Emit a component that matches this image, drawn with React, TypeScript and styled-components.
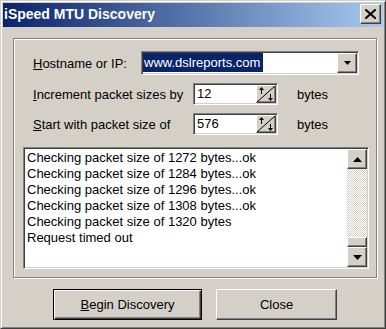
import React from "react";
import styled, { createGlobalStyle, css } from "styled-components";

const Global = createGlobalStyle`
  html, body { margin: 0; padding: 0; background: #d4d0c8; }
  * { box-sizing: border-box; }
  body { font-family: "Liberation Sans", Arial, sans-serif; font-size: 13px; color: #000; }
`;

const raised = css`
  border: 1px solid;
  border-color: #fff #404040 #404040 #fff;
  box-shadow: inset -1px -1px #808080;
  background: #d4d0c8;
`;

const sunken = css`
  border: 1px solid;
  border-color: #808080 #fff #fff #808080;
  box-shadow: inset 1px 1px #404040, inset -1px -1px #d4d0c8;
`;

const Window = styled.div`
  width: 386px;
  height: 329px;
  background: #d4d0c8;
  border: 1px solid;
  border-color: #d4d0c8 #404040 #404040 #d4d0c8;
  box-shadow: inset 1px 1px #fff, inset -1px -1px #808080;
  padding: 2px;
  display: flex;
  flex-direction: column;
`;

const TitleBar = styled.div`
  height: 24px;
  display: flex;
  align-items: flex-start;
  background: linear-gradient(to right, #0a246a, #a6caf0);
`;

const Title = styled.div`
  flex: 1;
  padding-left: 1px;
  line-height: 23px;
  font-size: 14px;
  font-weight: bold;
  color: #fff;
  white-space: nowrap;
`;

const CloseBox = styled.div`
  ${raised};
  width: 21px;
  height: 20px;
  margin: 1px 2px 0 0;
  display: flex;
  align-items: center;
  justify-content: center;
`;

const Body = styled.div`
  padding: 11px 6px 0 10px;
  display: flex;
  flex-direction: column;
`;

const GroupBox = styled.div`
  width: 364px;
  height: 240px;
  border: 1px solid #808080;
  box-shadow: inset 1px 1px #fff, 1px 1px #fff;
  padding: 12px 7px 8px 9px;
  display: flex;
  flex-direction: column;
`;

const Fields = styled.div`
  padding: 0 10px;
  display: flex;
  flex-direction: column;
  gap: 8px;
`;

const Row = styled.div<{ $h: number }>`
  height: ${(p) => p.$h}px;
  display: flex;
  align-items: center;
`;

const Label = styled.div<{ $w: number }>`
  width: ${(p) => p.$w}px;
  flex: none;
  white-space: nowrap;
`;

const Combo = styled.div`
  ${sunken};
  width: 218px;
  height: 24px;
  padding: 1px;
  background: #fff;
  display: flex;
  align-items: stretch;
`;

const ComboText = styled.div`
  flex: 1;
  display: flex;
  align-items: stretch;
  padding-bottom: 1px;
`;

const Selected = styled.span`
  background: #0a246a;
  color: #fff;
  padding: 0 1px;
  width: 120px;
  line-height: 19px;
  white-space: nowrap;
`;

const DropButton = styled.div`
  ${raised};
  width: 20px;
  height: 20px;
  display: flex;
  align-items: center;
  justify-content: center;
`;

const SpinField = styled.div`
  ${sunken};
  width: 85px;
  height: 22px;
  padding: 1px;
  background: #fff;
  display: flex;
`;

const SpinValue = styled.div`
  flex: 1;
  padding-left: 2px;
  line-height: 18px;
`;

const Spinner = styled.div`
  ${raised};
  width: 20px;
  height: 18px;
  position: relative;
`;

const Unit = styled.div`
  margin-left: 19px;
`;

const Log = styled.div`
  ${sunken};
  margin-top: 12px;
  width: 346px;
  height: 122px;
  padding: 1px;
  background: #fff;
  display: flex;
`;

const LogText = styled.div`
  flex: 1;
  padding: 1px 2px;
  line-height: 16px;
  white-space: nowrap;
  overflow: hidden;
`;

const ScrollBar = styled.div`
  width: 20px;
  display: flex;
  flex-direction: column;
`;

const ScrollButton = styled.div`
  ${raised};
  height: 20px;
  flex: none;
  display: flex;
  align-items: center;
  justify-content: center;
`;

const Track = styled.div`
  flex: 1;
  display: flex;
  flex-direction: column;
  justify-content: flex-end;
  background-image: conic-gradient(#fff 25%, #d4d0c8 0 50%, #fff 0 75%, #d4d0c8 0);
  background-size: 2px 2px;
`;

const Thumb = styled.div`
  ${raised};
  height: 10px;
`;

const Buttons = styled.div`
  margin-top: 11px;
  padding-left: 40px;
  display: flex;
  gap: 14px;
`;

const PushButton = styled.div<{ $w: number; $default?: boolean }>`
  width: ${(p) => p.$w}px;
  height: 31px;
  background: #d4d0c8;
  display: flex;
  align-items: center;
  justify-content: center;
  ${(p) =>
    p.$default
      ? css`
          border: 1px solid #000;
          box-shadow: inset 1px 1px #fff, inset -1px -1px #404040, inset -2px -2px #808080;
        `
      : css`
          border: 1px solid;
          border-color: #fff #404040 #404040 #fff;
          box-shadow: inset -1px -1px #808080;
        `}
`;

const Arrow = ({ down, w = 7, h = 4 }: { down?: boolean; w?: number; h?: number }) => (
  <svg width={w} height={h} viewBox={`0 0 ${w} ${h}`}>
    <polygon points={down ? `0,0 ${w},0 ${w / 2},${h}` : `0,${h} ${w},${h} ${w / 2},0`} fill="#000" />
  </svg>
);

const SpinGlyph = () => (
  <svg width="18" height="16" viewBox="0 0 18 16" style={{ position: "absolute", left: 0, top: 0 }}>
    <line x1="0" y1="16" x2="18" y2="0" stroke="#000" strokeWidth="1" />
    <line x1="4.5" y1="2" x2="4.5" y2="8" stroke="#000" strokeWidth="1" />
    <polygon points="2,4 7,4 4.5,1" fill="#000" />
    <line x1="13.5" y1="8" x2="13.5" y2="14" stroke="#000" strokeWidth="1" />
    <polygon points="11,12 16,12 13.5,15" fill="#000" />
  </svg>
);

const CloseGlyph = () => (
  <svg width="11" height="10" viewBox="0 0 11 10">
    <path d="M1 1 L10 9 M10 1 L1 9" stroke="#000" strokeWidth="2" strokeLinecap="square" />
  </svg>
);

const lines = [
  "Checking packet size of 1272 bytes...ok",
  "Checking packet size of 1284 bytes...ok",
  "Checking packet size of 1296 bytes...ok",
  "Checking packet size of 1308 bytes...ok",
  "Checking packet size of 1320 bytes",
  "Request timed out",
];

export default function App() {
  return (
    <>
      <Global />
      <Window>
        <TitleBar>
          <Title>iSpeed MTU Discovery</Title>
          <CloseBox>
            <CloseGlyph />
          </CloseBox>
        </TitleBar>
        <Body>
          <GroupBox>
            <Fields>
              <Row $h={24}>
                <Label $w={108}>
                  <u>H</u>ostname or IP:
                </Label>
                <Combo>
                  <ComboText>
                    <Selected>www.dslreports.com</Selected>
                  </ComboText>
                  <DropButton>
                    <Arrow down />
                  </DropButton>
                </Combo>
              </Row>
              <Row $h={22}>
                <Label $w={160}>
                  <u>I</u>ncrement packet sizes by
                </Label>
                <SpinField>
                  <SpinValue>12</SpinValue>
                  <Spinner>
                    <SpinGlyph />
                  </Spinner>
                </SpinField>
                <Unit>bytes</Unit>
              </Row>
              <Row $h={22}>
                <Label $w={160}>
                  <u>S</u>tart with packet size of
                </Label>
                <SpinField>
                  <SpinValue>576</SpinValue>
                  <Spinner>
                    <SpinGlyph />
                  </Spinner>
                </SpinField>
                <Unit>bytes</Unit>
              </Row>
            </Fields>
            <Log>
              <LogText>
                {lines.map((l, i) => (
                  <div key={i}>{l}</div>
                ))}
              </LogText>
              <ScrollBar>
                <ScrollButton>
                  <Arrow w={9} h={5} />
                </ScrollButton>
                <Track>
                  <Thumb />
                </Track>
                <ScrollButton>
                  <Arrow down w={9} h={5} />
                </ScrollButton>
              </ScrollBar>
            </Log>
          </GroupBox>
          <Buttons>
            <PushButton $w={149} $default>
              <span>
                <u>B</u>egin Discovery
              </span>
            </PushButton>
            <PushButton $w={121}>Close</PushButton>
          </Buttons>
        </Body>
      </Window>
    </>
  );
}
